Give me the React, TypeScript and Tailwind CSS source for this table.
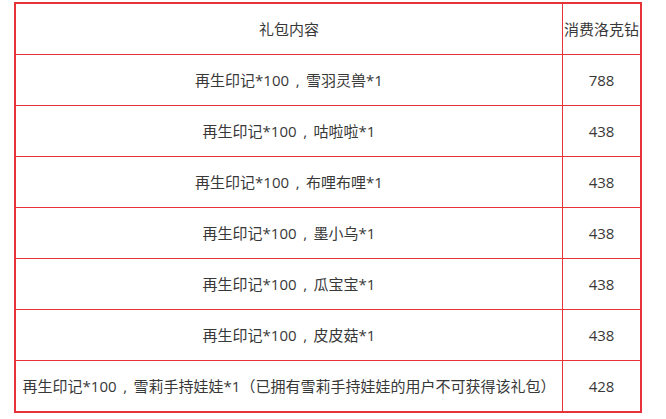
import React from "react";

const rows: [string, string][] = [
  ["再生印记*100，雪羽灵兽*1", "788"],
  ["再生印记*100，咕啦啦*1", "438"],
  ["再生印记*100，布哩布哩*1", "438"],
  ["再生印记*100，墨小乌*1", "438"],
  ["再生印记*100，瓜宝宝*1", "438"],
  ["再生印记*100，皮皮菇*1", "438"],
  ["再生印记*100，雪莉手持娃娃*1（已拥有雪莉手持娃娃的用户不可获得该礼包）", "428"],
];

function Text({ s }: { s: string }) {
  const parts = s.split("，");
  return (
    <span>
      {parts[0]}
      <span className="inline-block w-[17px] text-center">,</span>
      {parts[1]}
    </span>
  );
}

export default function App() {
  return (
    <div className="w-[666px] h-[419px] bg-white pt-[2px] pl-[14px] text-[15px] text-[#383838] [font-family:'Open_Sans','Noto_Sans_CJK_SC',sans-serif]">
      <div className="w-[628px] border-2 border-[#e53338] flex flex-col">
        <div className="flex h-[50px]">
          <div className="w-[546px] flex items-center justify-center">礼包内容</div>
          <div className="w-[78px] border-l border-[#e53338] flex items-center justify-center whitespace-nowrap">消费洛克钻</div>
        </div>
        {rows.map(([a, b], i) => (
          <div key={i} className="flex h-[51px] border-t border-[#e53338]">
            <div className="w-[546px] flex items-center justify-center whitespace-nowrap">
              <Text s={a} />
            </div>
            <div className="w-[78px] border-l border-[#e53338] flex items-center justify-center">{b}</div>
          </div>
        ))}
      </div>
    </div>
  );
}
